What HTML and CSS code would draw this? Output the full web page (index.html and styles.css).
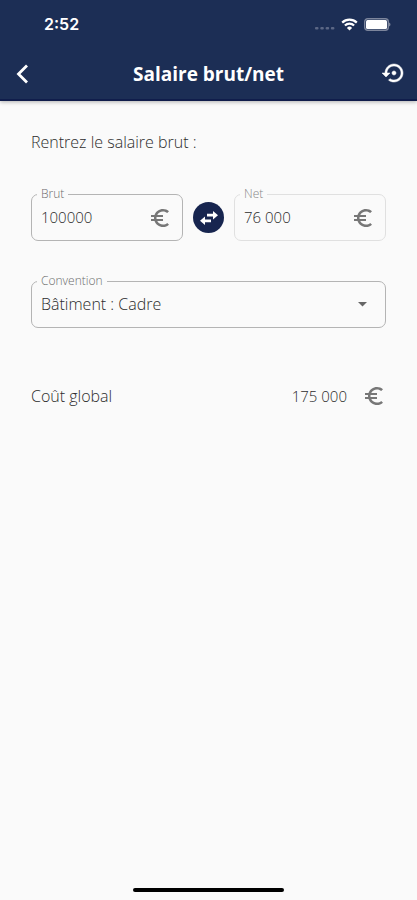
FILE: index.html
```html
<!DOCTYPE html>
<html lang="fr">
<head>
<meta charset="utf-8">
<meta name="viewport" content="width=device-width, initial-scale=1">
<title>Salaire brut/net</title>
<link rel="stylesheet" href="styles.css">
</head>
<body>
<svg class="sprite" aria-hidden="true">
  <symbol id="euro" viewBox="0 0 24 24"><path d="M15 18.5c-2.51 0-4.68-1.42-5.76-3.5H15v-2H8.58c-.05-.33-.08-.66-.08-1s.03-.67.08-1H15V9H9.24C10.32 6.92 12.5 5.5 15 5.5c1.61 0 3.09.59 4.23 1.57L21 5.3C19.41 3.87 17.3 3 15 3c-3.92 0-7.24 2.51-8.48 6H3v2h3.06c-.04.33-.06.66-.06 1s.02.67.06 1H3v2h3.52c1.24 3.49 4.56 6 8.48 6 2.31 0 4.41-.87 6-2.3l-1.78-1.77c-1.13.98-2.6 1.57-4.22 1.57z"/></symbol>
</svg>
<header class="header">
  <div class="status">
    <span class="time">2:52</span>
    <div class="indicators">
      <svg width="20" height="12" viewBox="0 0 20 12" fill="#5b6785"><rect x="0" y="9" width="3.500" height="2.500" rx="1"/><rect x="5.300" y="9" width="3.500" height="2.500" rx="1"/><rect x="10.600" y="9" width="3.500" height="2.500" rx="1"/><rect x="15.900" y="9" width="3.500" height="2.500" rx="1"/></svg>
      <svg width="17" height="13" viewBox="0 0 17 13" fill="none" stroke="#fff" stroke-width="2.200"><path d="M1.200 4.600a10.400 10.400 0 0 1 14.600 0M3.900 7.500a6.600 6.600 0 0 1 9.200 0"/><path d="M8.500 12.600 5.900 9.900a3.700 3.700 0 0 1 5.200 0z" fill="#fff" stroke="none"/></svg>
      <svg width="27" height="13" viewBox="0 0 27 13"><rect x=".7" y=".7" width="23.600" height="11.600" rx="3" fill="none" stroke="#7c859c" stroke-width="1.400"/><rect x="2" y="2" width="21" height="9" rx="1.500" fill="#fff"/><path d="M25 4.500c2 .8 2 3.200 0 4z" fill="#7c859c"/></svg>
    </div>
  </div>
  <div class="bar">
    <button class="icon-button" type="button" aria-label="Retour"><svg width="24" height="24" viewBox="0 0 24 24" fill="none" stroke="#fff" stroke-width="2.800"><path d="M15 3.500 6.500 12l8.500 8.500"/></svg></button>
    <h1 class="title">Salaire brut/net</h1>
    <button class="icon-button" type="button" aria-label="Réinitialiser"><svg width="24" height="24" viewBox="0 0 24 24" fill="#fff" stroke="#fff" stroke-width=".5"><path d="M15 11c0-1.100-.9-2-2-2s-2 .9-2 2 .9 2 2 2 2-.9 2-2zm-2-9c-4.970 0-9 4.030-9 9H1l4 4 4-4H6c0-3.870 3.130-7 7-7s7 3.130 7 7-3.130 7-7 7c-1.510 0-2.910-.49-4.060-1.300l-1.420 1.440C9.040 19.300 10.940 20 13 20c4.970 0 9-4.030 9-9s-4.030-9-9-9z"/></svg></button>
  </div>
</header>
<main class="content">
  <p class="prompt">Rentrez le salaire brut :</p>
  <div class="amounts">
    <div class="field">
      <label class="label" for="brut">Brut</label>
      <input class="control number" id="brut" type="text" inputmode="numeric" value="100000">
      <svg class="euro" aria-hidden="true"><use href="#euro"/></svg>
    </div>
    <button class="swap" type="button" aria-label="Inverser brut et net"><svg width="20" height="20" viewBox="0 0 20 20" fill="#fff"><path d="M8 5.800h6V3l5 4.200-5 4.200V8.600H8zM12 11.400H6V8.600l-5 4.200L6 17v-2.800h6z"/></svg></button>
    <div class="field field-muted">
      <label class="label" for="net">Net</label>
      <input class="control number" id="net" type="text" value="76 000" readonly>
      <svg class="euro" aria-hidden="true"><use href="#euro"/></svg>
    </div>
  </div>
  <div class="field">
    <label class="label" for="convention">Convention</label>
    <select class="control" id="convention"><option>Bâtiment : Cadre</option></select>
    <svg class="caret" width="9" height="5" viewBox="0 0 9 5" aria-hidden="true"><path d="M0 0h9L4.500 4.500z"/></svg>
  </div>
  <div class="total">
    <span>Coût global</span>
    <span class="sum number">175 000</span>
    <svg class="euro" aria-hidden="true"><use href="#euro"/></svg>
  </div>
</main>
<footer class="footer"><div class="home"></div></footer>
</body>
</html>
```
FILE: styles.css
```css
* { box-sizing: border-box; }

body {
  margin: 0;
  min-height: 100vh;
  display: flex;
  flex-direction: column;
  background: #fafafa;
  color: #2c2c2c;
  font: 300 16px/20px "Open Sans", sans-serif;
}

button { padding: 0; border: 0; cursor: pointer; }
svg { display: block; flex: none; }
.sprite { position: absolute; width: 0; height: 0; }

.header {
  background: #1c2e55;
  border-bottom: 2px solid #101d4b;
  box-shadow: 0 1px 4px rgba(0, 0, 0, .3);
  color: #fff;
}

.status {
  display: flex;
  justify-content: space-between;
  align-items: center;
  height: 48px;
  padding: 0 26px 0 44px;
}

.time { font: 600 16px/20px Inter, sans-serif; }
.indicators { display: flex; align-items: center; gap: 6px; }

.bar {
  display: flex;
  align-items: center;
  height: 51px;
  padding: 0 12px;
}

.icon-button { width: 24px; height: 24px; background: none; }
.title { flex: 1; margin: 0; text-align: center; font-size: 19px; line-height: 24px; font-weight: 700; }

.content { flex: 1; padding: 31px 31px 32px; }
.prompt { margin: 0 0 42px; }

.amounts {
  display: flex;
  align-items: center;
  gap: 10px;
  margin-bottom: 40px;
}

.field {
  position: relative;
  flex: 1;
  min-width: 0;
  height: 47px;
  display: flex;
  align-items: center;
  border: 1px solid #b4b4b4;
  border-radius: 7px;
}

.field-muted { border-color: #e0e0e0; }

.label {
  position: absolute;
  left: 5px;
  top: -8px;
  padding: 0 4px;
  background: #fafafa;
  color: #6c6c6c;
  font-size: 12px;
  line-height: 14px;
}

.field-muted .label { color: #888; }

.control {
  flex: 1;
  width: 100%;
  min-width: 0;
  height: 100%;
  padding: 0 9px 2px;
  border: 0;
  outline: 0;
  appearance: none;
  background: none;
  color: inherit;
  font: inherit;
}

.number { font-size: 15px; }

.euro { width: 24px; height: 24px; fill: #777; }
.field .euro { margin-right: 10px; }
.caret { position: absolute; right: 18px; fill: #666; pointer-events: none; }

.swap {
  display: grid;
  place-items: center;
  flex: none;
  width: 31px;
  height: 31px;
  border-radius: 50%;
  background: #17254f;
}

.total { display: flex; align-items: center; margin-top: 56px; }
.sum { margin-left: auto; margin-right: 15px; }

.footer { padding: 0 0 8px; }
.home { width: 36%; height: 4px; margin: 0 auto; border-radius: 2px; background: #000; }
```
